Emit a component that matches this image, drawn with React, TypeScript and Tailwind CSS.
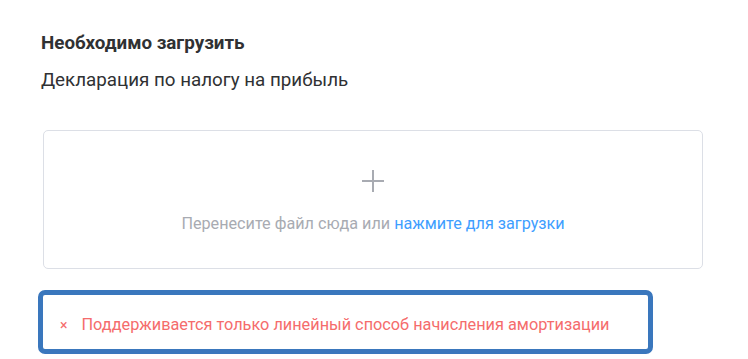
import React from "react";

export default function App() {
  return (
    <div
      className="w-[748px] h-[359px] bg-white overflow-hidden"
      style={{ fontFamily: "Roboto, 'Noto Sans', sans-serif" }}
    >
      <div className="pl-[41px] pt-[31px] w-[703px]">
        <div className="text-[18.8px] font-bold text-[#303133] leading-[24px]">
          Необходимо загрузить
        </div>
        <div className="mt-[13px] text-[18.8px] text-[#303133] leading-[24px]">
          Декларация по налогу на прибыль
        </div>
        <div className="mt-[38px] ml-[2px] h-[139px] border border-[#dcdfe6] rounded-[5px] flex flex-col items-center">
          <svg
            className="mt-[38px]"
            width="24"
            height="24"
            viewBox="0 0 24 24"
          >
            <path d="M12 1v22M1 12h22" stroke="#a8abb2" strokeWidth="2" />
          </svg>
          <div className="mt-[20px] text-[16.2px] leading-[22px] text-[#a8abb2]">
            Перенесите файл сюда или{" "}
            <span className="text-[#409eff]">нажмите для загрузки</span>
          </div>
        </div>
      </div>
      <div className="ml-[38px] mt-[21px] w-[615px] h-[64px] border-[5px] border-[#3a77bd] rounded-[7px] flex items-center pl-[17px] pt-[6px]">
        <span className="text-[#f56c6c] text-[14px] mr-[14px]">×</span>
        <span className="text-[#f56c6c] text-[16.3px] leading-[22px]">
          Поддерживается только линейный способ начисления амортизации
        </span>
      </div>
    </div>
  );
}
